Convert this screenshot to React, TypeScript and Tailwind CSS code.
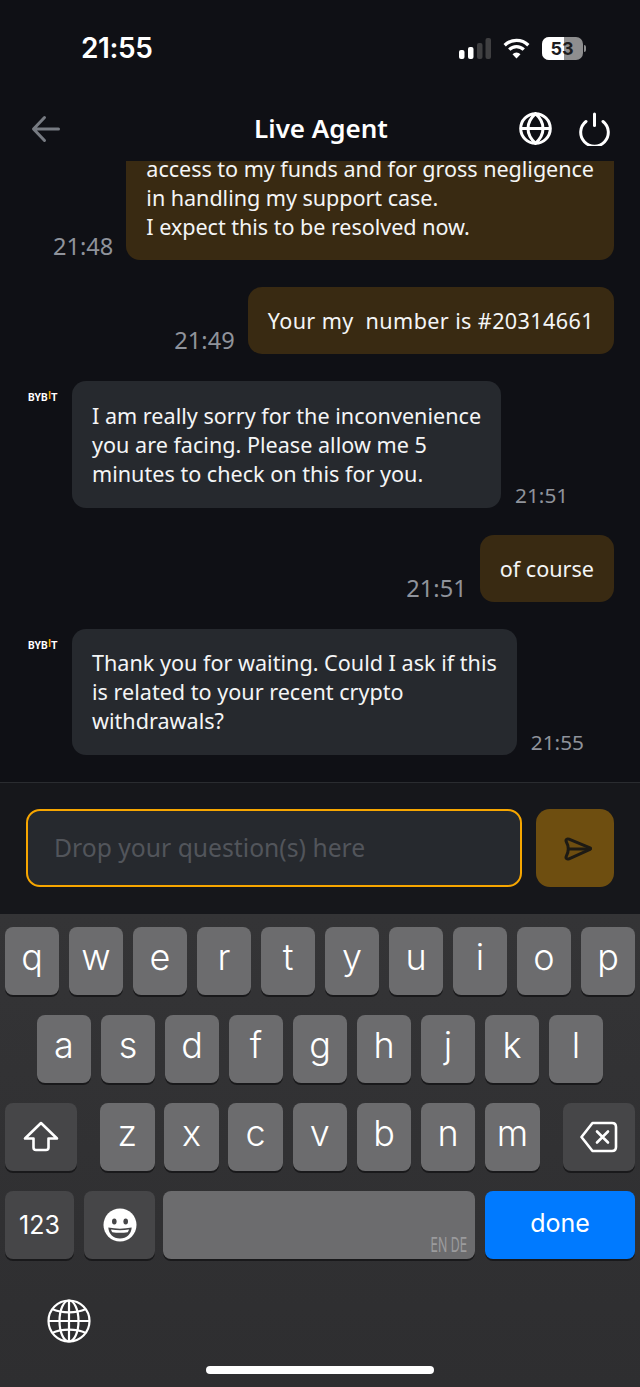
import { ReactNode } from "react"

const sans = "font-['Noto_Sans',sans-serif]"
const ui = "font-['Inter',sans-serif]"

type Message = { from: "me" | "agent"; time: string; text: string; clipped?: boolean; wide?: boolean }

const messages: Message[] = [
  {
    from: "me",
    time: "21:48",
    clipped: true,
    text: "access to my funds and for gross negligence\nin handling my support case.\nI expect this to be resolved now.",
  },
  { from: "me", time: "21:49", wide: true, text: "Your my  number is #20314661" },
  {
    from: "agent",
    time: "21:51",
    text: "I am really sorry for the inconvenience\nyou are facing. Please allow me 5\nminutes to check on this for you.",
  },
  { from: "me", time: "21:51", text: "of course" },
  {
    from: "agent",
    time: "21:55",
    text: "Thank you for waiting. Could I ask if this\nis related to your recent crypto\nwithdrawals?",
  },
]

function BybitLogo() {
  return (
    <span className="font-['Roboto',sans-serif] text-[10.5px] leading-[12px] font-bold tracking-[0.1px] text-white">
      BYB<span className="relative -top-[2px] text-[#f7a600]">I</span>T
    </span>
  )
}

function Bubble({ msg }: { msg: Message }) {
  if (msg.from === "agent") {
    return (
      <div className="flex pl-[28px]">
        <div className="w-[44px] pt-[8px] leading-[12px]">
          <BybitLogo />
        </div>
        <div className="rounded-[14px] bg-[#26292e] px-[20px] py-[19.75px] text-[21.6px] leading-[29px] whitespace-pre-wrap text-[#f4f5f6]">
          {msg.text}
        </div>
        <span className="mb-[1px] ml-[14px] self-end text-[20.8px] leading-[24px] text-[#8f939b]">{msg.time}</span>
      </div>
    )
  }
  return (
    <div className="flex justify-end pr-[26px]">
      <span className="mr-[13px] mb-[2px] self-end text-[23.6px] leading-[24px] text-[#8f939b]">{msg.time}</span>
      <div
        className={`rounded-[14px] bg-[#392a12] px-[20px] pb-[19px] text-[21.6px] leading-[29px] whitespace-pre-wrap text-[#f4f5f6] ${
          msg.clipped ? "pt-[60px] tracking-[-0.05px]" : "pt-[19px]"
        } ${msg.wide ? "tracking-[0.38px]" : ""}`}
      >
        {msg.text}
      </div>
    </div>
  )
}

function StatusBar() {
  return (
    <div className="flex h-[96px] items-center justify-between pr-[54px] pl-[81px]">
      <span className={`${ui} text-[28px] font-semibold tracking-[-0.4px] text-white`}>21:55</span>
      <div className="flex items-center gap-[12px]">
        <svg width="32" height="21" viewBox="0 0 32 21">
          <rect x="0" y="12" width="5.500" height="9" rx="2" fill="#fff" />
          <rect x="9" y="9" width="5.500" height="12" rx="2" fill="#fff" />
          <rect x="18" y="5" width="5.500" height="16" rx="2" fill="#3f3f41" />
          <rect x="26.500" y="0" width="5.500" height="21" rx="2" fill="#3f3f41" />
        </svg>
        <svg width="27" height="21" viewBox="0 0 28 22" fill="none" stroke="#fff" strokeWidth="3.400" strokeLinecap="butt">
          <path d="M1.600 7.600a17.500 17.500 0 0 1 24.800 0" />
          <path d="M6.400 12.200a10.600 10.600 0 0 1 15.200 0" />
          <path d="M14 21.500l-4.200-4.600a6 6 0 0 1 8.400 0z" fill="#fff" stroke="none" />
        </svg>
        <div className="flex items-center gap-[1.500px]">
          <div className="relative h-[23px] w-[41px] overflow-hidden rounded-[7px] bg-[#8e8e8f]">
            <div className="h-full w-[22px] bg-white" />
            <span className={`${ui} absolute inset-0 flex items-center justify-center text-[18px] font-bold text-[#1c1c1e]`}>
              53
            </span>
          </div>
          <div className="h-[7px] w-[2px] rounded-r-full bg-[#8e8e8f]" />
        </div>
      </div>
    </div>
  )
}

function Header() {
  return (
    <div className="flex h-[65px] items-center pr-[29px] pl-[31px]">
      <div className="flex-1">
        <svg width="30" height="28" viewBox="0 0 30 28" fill="none" stroke="#777b82" strokeWidth="3" strokeLinecap="round" strokeLinejoin="round">
          <path d="M27.500 14H3M13.500 2.500 2.500 14l11 11.500" />
        </svg>
      </div>
      <span className={`${sans} pb-[2px] text-[26px] leading-[32px] font-semibold text-white`}>Live Agent</span>
      <div className="flex flex-1 items-center justify-end gap-[27px]">
        <svg width="33" height="33" viewBox="0 0 33 33" fill="none" stroke="#fff" strokeWidth="3">
          <circle cx="16.500" cy="16.500" r="14.800" />
          <path d="M2 16.500h29" />
          <path d="M16.500 1.700c-10 9-10 20.600 0 29.600 10-9 10-20.600 0-29.600z" />
        </svg>
        <svg width="32" height="34" viewBox="0 0 32 34" fill="none" stroke="#fff" strokeWidth="3" strokeLinecap="round">
          <path d="M7 9.500a13.800 13.800 0 1 0 17 0" />
          <path d="M15.500 2v11.500" />
        </svg>
      </div>
    </div>
  )
}

function Composer() {
  return (
    <div className="flex h-[132px] gap-[13.500px] border-t border-[#2a2c30] bg-[#16171b] pt-[26px] pr-[26px] pl-[26px]">
      <div className="flex h-[78px] flex-1 items-center rounded-[14px] border-2 border-[#f7a600] bg-[#26292e] pb-[1px] pl-[26px]">
        <span className="text-[24.700px] text-[#52555b]">Drop your question(s) here</span>
      </div>
      <div className="flex h-[78px] w-[78.500px] items-center justify-center rounded-[14px] bg-[#6e4e10] pt-[2px] pl-[7px]">
        <svg width="28" height="24" viewBox="0 0 28 24" fill="none" stroke="#1d1a14" strokeWidth="3" strokeLinejoin="round" strokeLinecap="round">
          <path d="M5 2.200 26 10.800q1.500.800 0 1.600L5 21.800c-2 .700-3.500-.500-2.800-2.300C4.700 15 4.700 9 2.200 4.500 1.500 2.700 3 1.500 5 2.200z" />
          <path d="M5 12h20" />
        </svg>
      </div>
    </div>
  )
}

function Key({ w, dark, children }: { w: string; dark?: boolean; children: ReactNode }) {
  return (
    <div
      className={`${w} flex h-[68px] shrink-0 items-center justify-center rounded-[8px] ${ui} text-[36px] leading-none font-light text-white shadow-[0_2px_0_#19191b] ${
        dark ? "bg-[#464648]" : "bg-[#6c6c6e]"
      }`}
    >
      {children}
    </div>
  )
}

function Keyboard() {
  return (
    <div className="flex flex-1 flex-col bg-linear-to-b from-[#343436] to-[#2e2e30]">
      <div className="flex flex-col gap-[20px] pt-[13px]">
        <div className="flex justify-center gap-[10px]">
          {"qwertyuiop".split("").map((k) => (
            <Key key={k} w="w-[54px]">
              <span className="-mt-[8px]">{k}</span>
            </Key>
          ))}
        </div>
        <div className="flex justify-center gap-[10px]">
          {"asdfghjkl".split("").map((k) => (
            <Key key={k} w="w-[54px]">
              <span className="-mt-[8px]">{k}</span>
            </Key>
          ))}
        </div>
        <div className="flex px-[5px]">
          <Key w="w-[72px]" dark>
            <svg width="36" height="32" viewBox="0 0 36 32" fill="none" stroke="#fff" strokeWidth="2.600" strokeLinejoin="round">
              <path d="M18 2 2 17.500h8.500v9c0 1.500 1 2.500 2.500 2.500h10c1.500 0 2.500-1 2.500-2.500v-9H34z" />
            </svg>
          </Key>
          <div className="ml-[23px] flex gap-[9.700px]">
            {"zxcvbnm".split("").map((k) => (
              <Key key={k} w="w-[54.500px]">
                <span className="-mt-[8px]">{k}</span>
              </Key>
            ))}
          </div>
          <div className="ml-auto">
            <Key w="w-[72px]" dark>
              <svg width="38" height="32" viewBox="0 0 38 32" fill="none" stroke="#fff" strokeWidth="2.600" strokeLinejoin="round" strokeLinecap="round">
                <path d="M12.500 2H32c2.500 0 4 1.500 4 4v20c0 2.500-1.500 4-4 4H12.500L1.500 16z" />
                <path d="M17 10.500l11 11M28 10.500l-11 11" />
              </svg>
            </Key>
          </div>
        </div>
        <div className="flex pl-[5px]">
          <Key w="w-[69px]" dark>
            <span className={`${ui} text-[25px] font-normal`}>123</span>
          </Key>
          <div className="ml-[10px]">
            <Key w="w-[71px]" dark>
              <svg width="34" height="34" viewBox="0 0 34 34">
                <circle cx="17" cy="17" r="16.500" fill="#fff" />
                <ellipse cx="11.300" cy="13.500" rx="2.300" ry="3" fill="#464648" />
                <ellipse cx="22.700" cy="13.500" rx="2.300" ry="3" fill="#464648" />
                <path d="M5.300 19.500c7.500 1.500 15.900 1.500 23.400 0-.4 6.500-5 11-11.700 11S5.700 26 5.300 19.500z" fill="#464648" />
                <path d="M8 21.500c5.500.9 12.500.9 18 0-.3 1-.7 1.900-1.300 2.700-4.800.8-10.600.8-15.400 0-.6-.8-1-1.700-1.300-2.700z" fill="#fff" />
              </svg>
            </Key>
          </div>
          <div className="ml-[8px]">
            <Key w="w-[312px]">
              <span className="mt-[40px] ml-[238px] origin-right scale-x-[0.62] text-[20px] leading-none font-normal whitespace-nowrap text-[#9b9b9d]">
                EN DE
              </span>
            </Key>
          </div>
          <div className="ml-[10px]">
            <Key w="w-[150px] !bg-[#007aff]">
              <span className={`${ui} -mt-[4px] text-[25px] font-normal`}>done</span>
            </Key>
          </div>
        </div>
      </div>
      <div className="flex pt-[40px] pl-[47px]">
        <svg width="44" height="44" viewBox="0 0 44 44" fill="none" stroke="#fff" strokeWidth="2.200">
          <circle cx="22" cy="22" r="20.500" />
          <path d="M22 1.500v41M1.500 22h41" />
          <ellipse cx="22" cy="22" rx="9.500" ry="20.500" />
          <path d="M5 10c10 4.500 24 4.500 34 0M5 34c10-4.500 24-4.500 34 0" />
        </svg>
      </div>
      <div className="mt-auto flex justify-center pb-[13px]">
        <div className="h-[8px] w-[228px] rounded-full bg-white" />
      </div>
    </div>
  )
}

export default function App() {
  return (
    <div className={`${sans} flex h-[1387px] w-[640px] flex-col overflow-hidden bg-[#0f1015]`}>
      <StatusBar />
      <Header />
      <div className="flex min-h-0 flex-1 flex-col justify-end gap-[27px] overflow-hidden pb-[27px]">
        {messages.map((m) => (
          <Bubble key={m.time + m.from} msg={m} />
        ))}
      </div>
      <Composer />
      <div className="flex h-[473px] flex-col">
        <Keyboard />
      </div>
    </div>
  )
}
